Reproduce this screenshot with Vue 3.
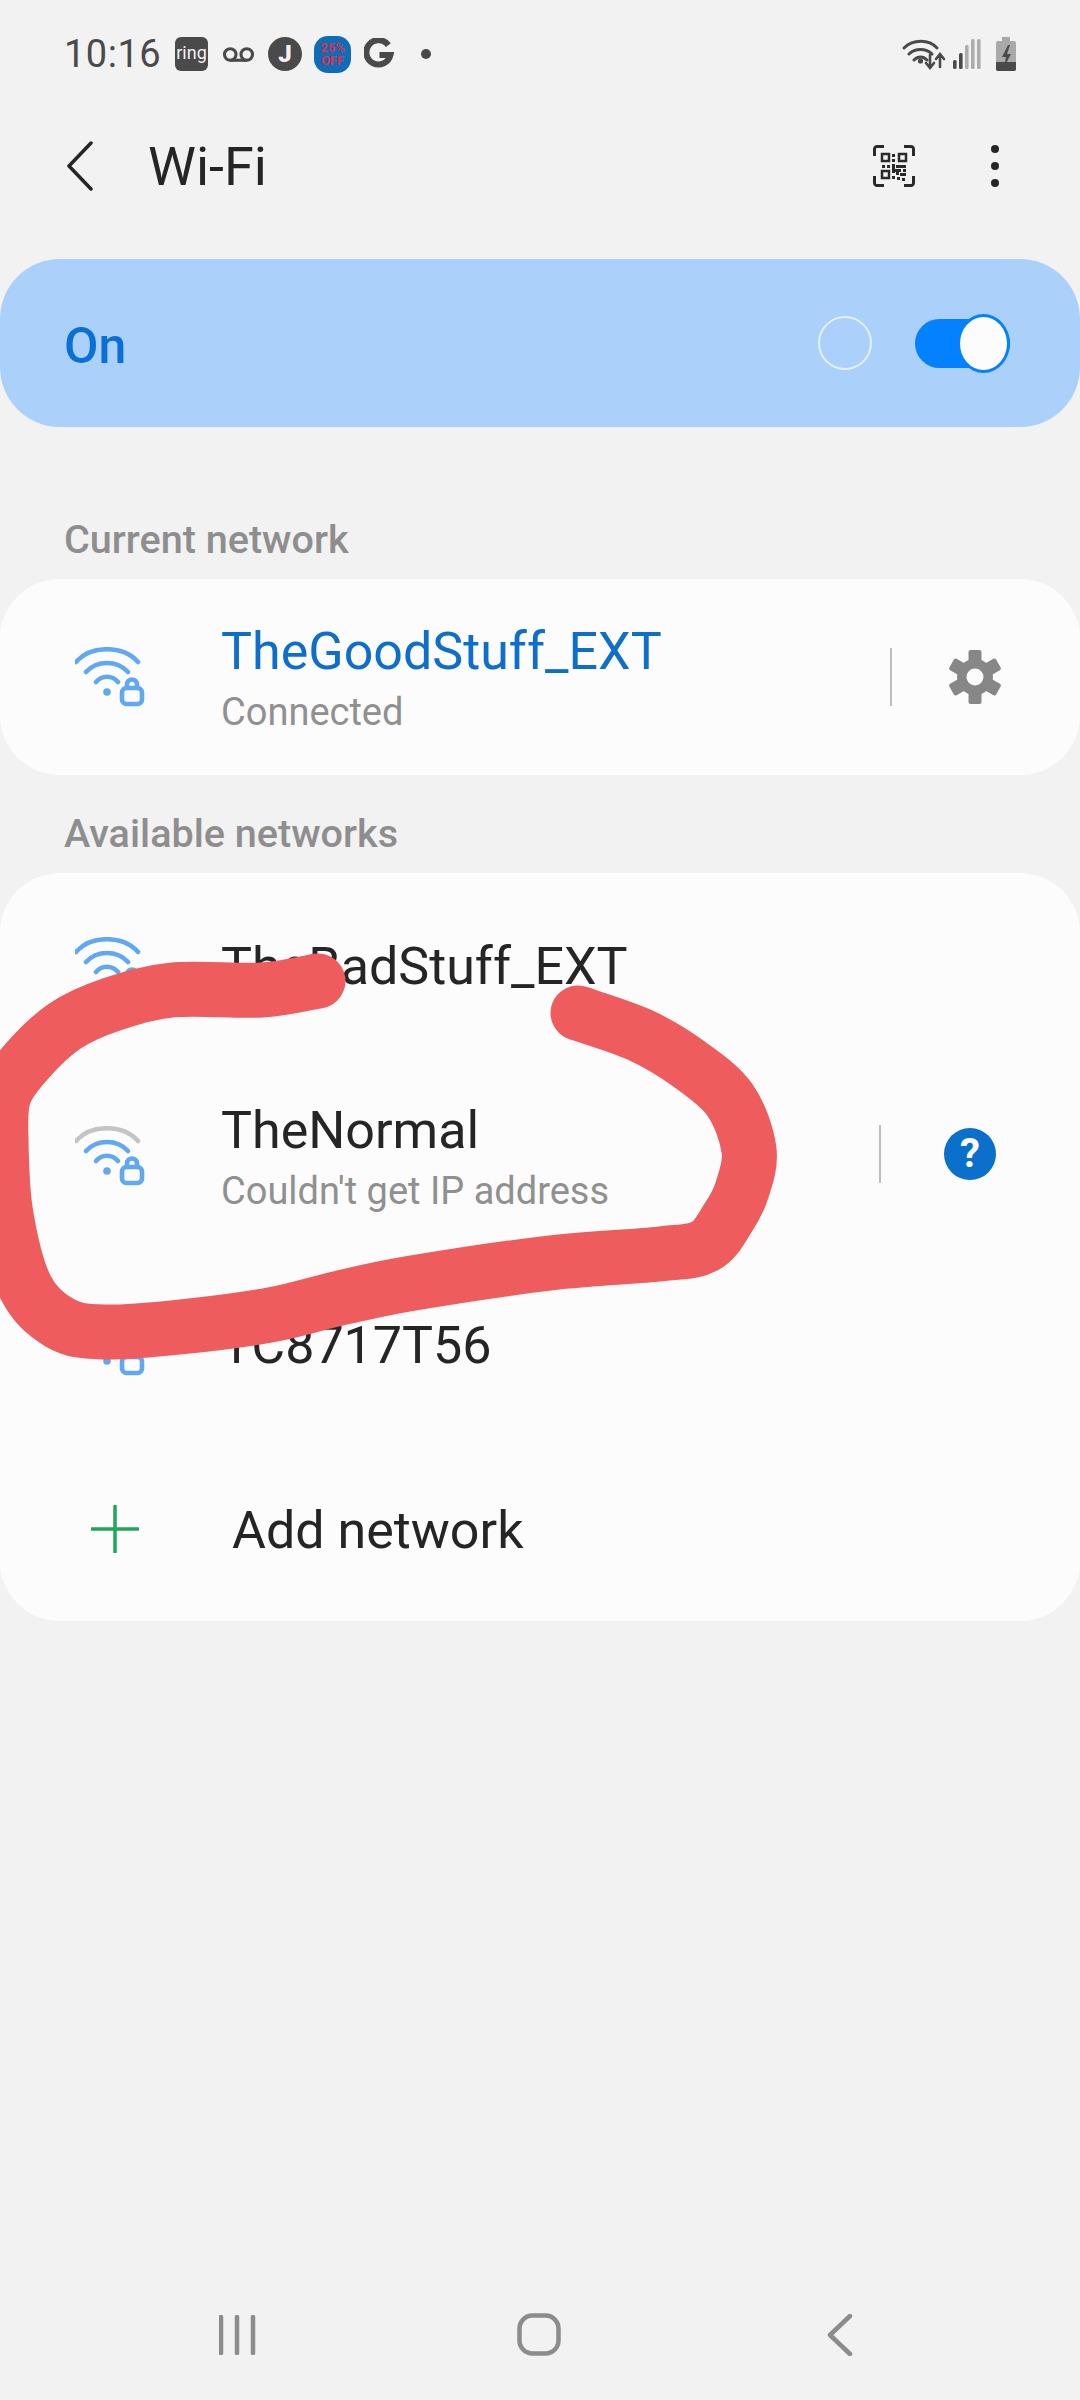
<template>
  <div class="screen">
    <div class="status-bar">
      <span class="clock">10:16</span>
      <span class="ring-badge">ring</span>
      <svg class="voicemail" viewBox="0 0 32 16" width="33" height="17">
        <circle cx="8" cy="8" r="5.6" />
        <circle cx="24" cy="8" r="5.6" />
        <path d="M8 13.6h16" />
      </svg>
      <span class="j-badge">J</span>
      <span class="coupon"><b>25%</b><b>OFF</b></span>
      <svg class="g-logo" viewBox="0 0 32 34" width="30" height="32">
        <path d="M26 7.5A13 13 0 1 0 28.2 18H16.5" />
      </svg>
      <span class="dot"></span>
      <span class="status-right">
        <svg viewBox="0 0 44 34" width="44" height="34" class="wifi-mini">
          <path d="M2 11C11 2 27 2 35 11M7 17c6-6 17-6 23 0M12 23c4-4 9-4 13 0" />
          <circle cx="18.500" cy="24" r="2.600" class="fill" />
          <path d="M28 18v12M24 26l4 5 4-5M38 30V18M34 22l4-5 4 5" class="arrows" />
        </svg>
        <svg viewBox="0 0 28 32" width="28" height="32" class="signal">
          <rect v-for="(h, i) in signalBars" :key="i" :x="i * 6" :y="31 - h" width="3.600" :height="h" rx="1.500" :class="{ strong: i < 2 }" />
        </svg>
        <svg viewBox="0 0 22 34" width="22" height="34" class="battery">
          <path d="M7 0h8v4h4a2 2 0 0 1 2 2v26a2 2 0 0 1-2 2H3a2 2 0 0 1-2-2V6a2 2 0 0 1 2-2h4z" fill="#a9a9a9" />
          <path d="M1 25h20v7a2 2 0 0 1-2 2H3a2 2 0 0 1-2-2z" fill="#4a4a4a" />
          <path d="M13 8l-6 12h4l-2 10 7-13h-4l3-9z" fill="#4a4a4a" />
        </svg>
      </span>
    </div>

    <header class="app-bar">
      <svg class="back" viewBox="0 0 26 50" width="26" height="50">
        <path d="M24 2 2 25l22 23" />
      </svg>
      <h1>Wi-Fi</h1>
      <svg class="qr" viewBox="0 0 42 42" width="42" height="42">
        <path class="corners" d="M1.500 11V4a2.500 2.500 0 0 1 2.500-2.500h7M31 1.500h7a2.500 2.500 0 0 1 2.500 2.500v7M1.500 31v7a2.500 2.500 0 0 0 2.500 2.500h7M31 40.500h7a2.500 2.500 0 0 0 2.500-2.500v-7" />
        <rect class="finder" x="9" y="9" width="7" height="7" />
        <rect class="finder" x="26" y="9" width="7" height="7" />
        <rect class="finder" x="9" y="26" width="7" height="7" />
        <rect v-for="(c, i) in qrCells" :key="i" :x="c[0]" :y="c[1]" :width="c[2]" :height="c[3]" fill="#2a2a2a" />
      </svg>
      <div class="more"><i></i><i></i><i></i></div>
    </header>

    <section class="master">
      <span class="master-text">On</span>
      <span class="spacer"></span>
      <span class="ghost-circle"></span>
      <span class="toggle"><i></i></span>
    </section>

    <p class="label first">Current network</p>
    <section class="card">
      <div class="row current">
        <svg class="wifi" viewBox="36 26 70 60" width="70" height="60">
          <path d="M37 41C52 24 84 24 99 41M47 51c11-12 31-12 42 0M57 61c6-7 16-7 22 0" />
          <circle cx="68" cy="71" r="3.800" class="fill" />
          <rect x="83" y="67" width="20" height="16" rx="4.500" />
          <path d="M88 67v-3.500a5 5 0 0 1 10 0V67" />
        </svg>
        <div class="names">
          <div class="name blue">TheGoodStuff_EXT</div>
          <div class="sub">Connected</div>
        </div>
        <span class="divider"></span>
        <svg class="gear" viewBox="-27 -27 54 54" width="54" height="54">
          <rect v-for="a in gearTeeth" :key="a" x="-6.500" y="-27" width="13" height="14" rx="2" :transform="`rotate(${a})`" />
          <path fill-rule="evenodd" d="M-18 0a18 18 0 1 0 36 0a18 18 0 1 0-36 0zM-8.500 0a8.500 8.500 0 1 1 17 0a8.500 8.500 0 1 1-17 0z" />
        </svg>
      </div>
    </section>

    <p class="label second">Available networks</p>
    <section class="card list">
      <div class="row plain first-row">
        <svg class="wifi" viewBox="36 26 70 60" width="70" height="60">
          <path d="M37 41C52 24 84 24 99 41M47 51c11-12 31-12 42 0M57 61c6-7 16-7 22 0" />
          <circle cx="68" cy="71" r="3.800" class="fill" />
          <rect x="83" y="67" width="20" height="16" rx="4.500" />
          <path d="M88 67v-3.500a5 5 0 0 1 10 0V67" />
        </svg>
        <div class="names"><div class="name">TheBadStuff_EXT</div></div>
      </div>
      <div class="row plain">
        <svg class="wifi" viewBox="36 26 70 60" width="70" height="60">
          <path class="weak" d="M37 41C52 24 84 24 99 41" />
          <path d="M47 51c11-12 31-12 42 0M57 61c6-7 16-7 22 0" />
          <circle cx="68" cy="71" r="3.800" class="fill" />
          <rect x="83" y="67" width="20" height="16" rx="4.500" />
          <path d="M88 67v-3.500a5 5 0 0 1 10 0V67" />
        </svg>
        <div class="names">
          <div class="name">TheNormal</div>
          <div class="sub">Couldn't get IP address</div>
        </div>
        <span class="divider tight"></span>
        <span class="help">?</span>
      </div>
      <div class="row plain">
        <svg class="wifi" viewBox="36 26 70 60" width="70" height="60">
          <path d="M37 41C52 24 84 24 99 41M47 51c11-12 31-12 42 0M57 61c6-7 16-7 22 0" />
          <circle cx="68" cy="71" r="3.800" class="fill" />
          <rect x="83" y="67" width="20" height="16" rx="4.500" />
          <path d="M88 67v-3.500a5 5 0 0 1 10 0V67" />
        </svg>
        <div class="names"><div class="name">TC8717T56</div></div>
      </div>
      <div class="row add">
        <svg class="plus" viewBox="0 0 48 48" width="48" height="48">
          <path d="M24 1v46M1 24h46" />
        </svg>
        <div class="name">Add network</div>
      </div>
    </section>

    <nav class="nav-bar">
      <svg viewBox="0 0 38 40" width="38" height="40" class="nav-icon recents">
        <path d="M2 2v36M18 2v36M34 2v36" />
      </svg>
      <svg viewBox="0 0 44 44" width="44" height="44" class="nav-icon home">
        <rect x="2.500" y="2.500" width="39" height="38" rx="13" />
      </svg>
      <svg viewBox="0 0 26 42" width="26" height="42" class="nav-icon navback">
        <path d="M23 2 3 21l20 19" />
      </svg>
    </nav>

    <svg class="scribble" viewBox="0 0 1080 2400" width="1080" height="2400">
      <path :d="scribblePath" />
    </svg>
  </div>
</template>

<script setup>
const signalBars = [9, 16, 24, 30, 30]
const gearTeeth = [0, 60, 120, 180, 240, 300]

const qrCells = [
  [19, 9, 3, 3], [19, 14, 3, 3], [19, 19, 3, 9], [9, 20, 3, 3], [14, 20, 3, 3],
  [23, 20, 10, 3], [25, 24, 3, 3], [30, 24, 3, 3], [23, 27, 3, 3], [27, 28, 6, 3],
  [19, 31, 3, 3], [24, 32, 3, 3], [29, 33, 3, 3], [22, 24, 3, 3]
]

// hand-traced stroke, smoothed through the points
const points = [
  [318, 981], [262, 990], [172, 990], [110, 1005], [65, 1026], [28, 1060], [4, 1095], [1, 1140],
  [6, 1215], [26, 1288], [60, 1323], [103, 1332], [180, 1327], [270, 1315], [340, 1298], [413, 1283],
  [550, 1263], [660, 1254], [705, 1246], [728, 1218], [742, 1190], [749, 1150], [730, 1100], [689, 1064], [640, 1035], [578, 1013]
]

function smooth(pts) {
  let d = `M${pts[0][0]} ${pts[0][1]}`
  for (let i = 0; i < pts.length - 1; i++) {
    const a = pts[i - 1] || pts[i]
    const b = pts[i]
    const c = pts[i + 1]
    const e = pts[i + 2] || c
    d += `C${b[0] + (c[0] - a[0]) / 6} ${b[1] + (c[1] - a[1]) / 6} ${c[0] - (e[0] - b[0]) / 6} ${c[1] - (e[1] - b[1]) / 6} ${c[0]} ${c[1]}`
  }
  return d
}

const scribblePath = smooth(points)
</script>

<style>
html,
body {
  margin: 0;
  background: #f2f2f2;
}
</style>

<style scoped>
.screen {
  position: relative;
  width: 1080px;
  height: 2400px;
  overflow: hidden;
  display: flex;
  flex-direction: column;
  background: #f2f2f2;
  font-family: Roboto, "Liberation Sans", sans-serif;
  color: #252525;
}
.status-bar {
  height: 34px;
  margin-top: 37px;
  padding: 0 63px 0 64px;
  display: flex;
  align-items: center;
  color: #4a4a4a;
}
.clock {
  font-size: 38px;
  width: 111px;
  letter-spacing: 0.5px;
}
.ring-badge {
  width: 33px;
  height: 34px;
  border-radius: 6px;
  background: #4a4a4a;
  color: #f2f2f2;
  font-size: 18px;
  line-height: 32px;
  text-align: center;
}
.voicemail {
  margin-left: 14px;
  fill: none;
  stroke: #4a4a4a;
  stroke-width: 3;
}
.j-badge {
  margin-left: 13px;
  width: 34px;
  height: 34px;
  border-radius: 50%;
  background: #4a4a4a;
  color: #f2f2f2;
  font-size: 24px;
  font-weight: 900;
  line-height: 34px;
  text-align: center;
}
.coupon {
  margin-left: 12px;
  width: 37px;
  height: 37px;
  border-radius: 14px;
  background: #0f6cb6;
  color: #d9304f;
  display: flex;
  flex-direction: column;
  align-items: center;
  justify-content: center;
  font-size: 13px;
  line-height: 13px;
}
.g-logo {
  margin-left: 13px;
  fill: none;
  stroke: #4a4a4a;
  stroke-width: 6.500;
}
.dot {
  margin-left: 27px;
  width: 10px;
  height: 10px;
  border-radius: 50%;
  background: #4a4a4a;
}
.status-right {
  margin-left: auto;
  display: flex;
  align-items: center;
  gap: 7px;
}
.wifi-mini {
  fill: none;
  stroke: #4a4a4a;
  stroke-width: 3;
  stroke-linecap: round;
}
.wifi-mini .fill {
  fill: #4a4a4a;
  stroke: none;
}
.wifi-mini .arrows {
  stroke-width: 2.600;
}
.signal {
  fill: #adadad;
}
.signal .strong {
  fill: #4a4a4a;
}
.battery {
  margin-left: 7px;
}

.app-bar {
  height: 50px;
  margin-top: 70px;
  padding-left: 67px;
  padding-right: 81px;
  display: flex;
  align-items: center;
}
.back {
  fill: none;
  stroke: #252525;
  stroke-width: 3.500;
  stroke-linecap: round;
  stroke-linejoin: round;
}
h1 {
  margin: 0 0 0 55px;
  font-size: 54px;
  font-weight: 400;
  flex: 1;
}
.qr {
  margin-right: 76px;
  fill: none;
}
.corners {
  stroke: #2a2a2a;
  stroke-width: 3;
}
.finder {
  stroke: #2a2a2a;
  stroke-width: 2.500;
}
.more {
  display: flex;
  flex-direction: column;
  gap: 9px;
}
.more i {
  display: block;
  width: 8px;
  height: 8px;
  border-radius: 50%;
  background: #252525;
}

.master {
  margin-top: 68px;
  height: 168px;
  padding: 0 70px 0 64px;
  border-radius: 60px;
  background: #abd1fa;
  color: #0a70d6;
  font-size: 50px;
  font-weight: 500;
  display: flex;
  align-items: center;
}
.master-text {
  padding-top: 5px;
}
.spacer {
  flex: 1;
}
.ghost-circle {
  width: 50px;
  height: 50px;
  border: 2.500px solid #e4f0fc;
  border-radius: 50%;
  margin-right: 43px;
}
.toggle {
  position: relative;
  width: 95px;
  height: 49px;
  border-radius: 25px;
  background: #0381fe;
}
.toggle i {
  position: absolute;
  right: 0;
  top: -5px;
  border: 3px solid #0381fe;
  border-radius: 50%;
  background: #fcfcfc;
  box-sizing: content-box;
  width: 47px;
  height: 53px;
}

.label {
  margin: 0;
  font-size: 39.600px;
  font-weight: 500;
  line-height: 42px;
  color: #8e8e8e;
  padding-left: 64px;
}
.label.first {
  margin-top: 92px;
}
.label.second {
  margin-top: 38px;
}

.card {
  margin-top: 18px;
  border-radius: 60px;
  background: #fcfcfc;
}
.row {
  display: flex;
  align-items: center;
  padding-left: 75px;
}
.current {
  height: 196px;
  padding-right: 78px;
}
.plain {
  height: 190px;
  padding-right: 84px;
}
.first-row {
  height: 188px;
}
.add {
  height: 180px;
  padding-left: 91px;
}
.wifi {
  flex: none;
  fill: none;
  stroke: #60a8f2;
  stroke-width: 4.600;
  stroke-linecap: round;
}
.wifi .fill {
  fill: #60a8f2;
  stroke: none;
}
.wifi .weak {
  stroke: #c4c4c4;
}
.names {
  margin-left: 76px;
  flex: 1;
}
.name {
  font-size: 52px;
  line-height: 60px;
  color: #252525;
}
.name.blue {
  color: #0d6fcb;
}
.sub {
  margin-top: 9px;
  font-size: 38px;
  line-height: 42px;
  color: #909090;
}
.divider {
  width: 2px;
  height: 58px;
  background: #bdbdbd;
  margin-right: 56px;
}
.divider.tight {
  margin-right: 63px;
  margin-bottom: 4px;
}
.gear {
  fill: #878787;
}
.help {
  width: 52px;
  height: 52px;
  margin-bottom: 5px;
  border-radius: 50%;
  background: #0a70cc;
  color: #fcfcfc;
  font-size: 40px;
  font-weight: 700;
  line-height: 52px;
  text-align: center;
}
.plus {
  fill: none;
  stroke: #1fa85a;
  stroke-width: 3.500;
  stroke-linecap: round;
  margin-right: 93px;
  margin-bottom: 5px;
}

.nav-bar {
  margin-top: auto;
  margin-bottom: 43px;
  height: 44px;
  padding: 0 227px 0 219px;
  display: flex;
  align-items: center;
  justify-content: space-between;
}
.nav-icon {
  fill: none;
  stroke: #8c8c8c;
  stroke-width: 4.500;
  stroke-linecap: round;
  stroke-linejoin: round;
}
.home {
  margin-right: 6px;
}

.scribble {
  position: absolute;
  left: 0;
  top: 0;
  pointer-events: none;
  fill: none;
  stroke: #ee5c5e;
  stroke-width: 55;
  stroke-linecap: round;
  stroke-linejoin: round;
}
</style>
